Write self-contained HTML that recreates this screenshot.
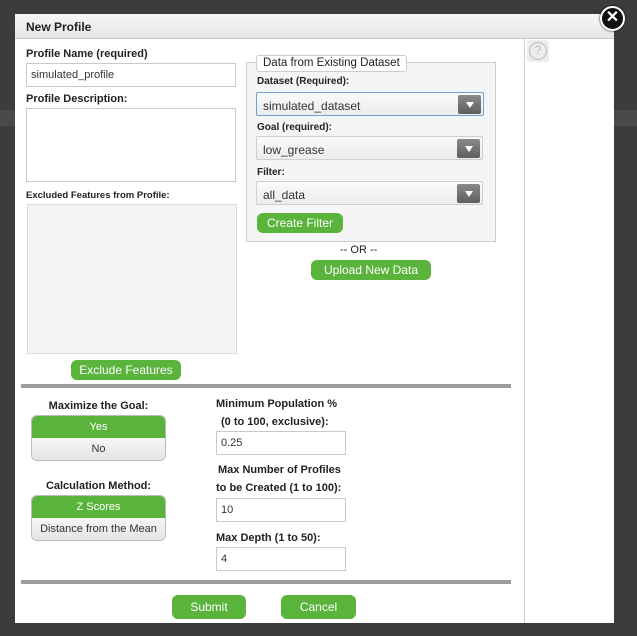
<!DOCTYPE html>
<html><head><style>
*{box-sizing:border-box;margin:0;padding:0}
body{width:637px;height:636px;background:#3c3c3c;position:relative;overflow:hidden;font-family:"Liberation Sans",sans-serif;color:#222}
.a{position:absolute}
.band{left:0;top:110px;width:637px;height:16px;background:#4a4a4a}
.dlg{left:15px;top:14px;width:599px;height:609px;background:#fff}
.hdr{left:15px;top:14px;width:599px;height:25px;background:linear-gradient(#f7f7f7,#e6e6e6);border-bottom:1px solid #c8c8c8;font-weight:bold;font-size:12px;padding:6px 0 0 11px;color:#222}
.vl{left:524px;top:39px;width:1px;height:584px;background:#ccc}
.lb{font-weight:bold;font-size:11px;white-space:nowrap}
.in{background:#fff;border:1px solid #c9c9c9;font-size:11px;padding:0 0 0 4px;display:flex;align-items:center;color:#333}
.btn{background:#5ab43c;color:#fff;border-radius:6px;font-size:12px;text-align:center;display:flex;align-items:center;justify-content:center}
.sel{background:linear-gradient(#fafafa,#ececec);border:1px solid #cfcfcf;border-radius:2px;font-size:12px;color:#333;padding:6px 0 0 6px}
.arr{position:absolute;right:2px;top:2px;width:23px;height:19px;background:linear-gradient(#8a8a8a,#5e5e5e);border-radius:2px}
.arr:after{content:"";position:absolute;left:8px;top:7px;border-left:4px solid transparent;border-right:4px solid transparent;border-top:6px solid #fff}
.hr{left:21px;width:490px;height:4px;background:#9c9c9c}
.tg{border:1px solid #bbb;border-radius:6px;overflow:hidden;font-size:11px;text-align:center}
.tg div{height:22px;line-height:22px}
.on{background:#5ab43c;color:#fff}
.off{background:linear-gradient(#f6f6f6,#e4e4e4);color:#333}
</style></head><body>
<div class="a band"></div>
<div class="a dlg"></div>
<div class="a hdr">New Profile</div>
<div class="a vl"></div>
<div class="a" style="left:527px;top:40px;width:22px;height:22px;background:#ececec;border-radius:3px"><div style="margin:2px;width:18px;height:18px;border:1.5px solid #bbb;border-radius:50%;color:#bbb;font-size:12px;text-align:center;line-height:15px">?</div></div>
<div class="a" style="left:600px;top:6px;width:25px;height:25px;background:#111;border:2px solid #fff;border-radius:50%;color:#fff;font-weight:bold;font-size:16px;text-align:center;line-height:20px;box-shadow:0 0 2px #000">✕</div>

<div class="a lb" style="left:26px;top:48px">Profile Name (required)</div>
<div class="a in" style="left:26px;top:63px;width:210px;height:24px">simulated_profile</div>
<div class="a lb" style="left:26px;top:93px">Profile Description:</div>
<div class="a in" style="left:26px;top:108px;width:210px;height:74px"></div>
<div class="a lb" style="left:26px;top:190px;font-size:9.5px">Excluded Features from Profile:</div>
<div class="a" style="left:27px;top:204px;width:210px;height:150px;background:#f4f4f4;border:1px solid #ddd"></div>
<div class="a btn" style="left:71px;top:360px;width:110px;height:20px">Exclude Features</div>

<div class="a" style="left:246px;top:62px;width:250px;height:180px;background:#f5f5f5;border:1px solid #ccc"></div>
<div class="a" style="left:256px;top:55px;width:151px;height:17px;background:#fff;border:1px solid #ccc;border-radius:3px;font-size:11.5px;padding:1px 0 0 6px;white-space:nowrap">Data from Existing Dataset</div>
<div class="a lb" style="left:257px;top:76px;font-size:10px">Dataset (Required):</div>
<div class="a sel" style="left:256px;top:92px;width:228px;height:24px;border-color:#6aa4d8">simulated_dataset<div class="arr"></div></div>
<div class="a lb" style="left:257px;top:122px;font-size:10px">Goal (required):</div>
<div class="a sel" style="left:256px;top:136px;width:227px;height:24px">low_grease<div class="arr"></div></div>
<div class="a lb" style="left:257px;top:167px;font-size:10px">Filter:</div>
<div class="a sel" style="left:256px;top:181px;width:227px;height:24px">all_data<div class="arr"></div></div>
<div class="a btn" style="left:257px;top:213px;width:86px;height:20px">Create Filter</div>
<div class="a" style="left:340px;top:244px;font-size:11px">-- OR --</div>
<div class="a btn" style="left:311px;top:260px;width:120px;height:20px">Upload New Data</div>

<div class="a hr" style="top:384px"></div>
<div class="a lb" style="left:31px;top:400px;width:135px;text-align:center">Maximize the Goal:</div>
<div class="a tg" style="left:31px;top:415px;width:135px"><div class="on">Yes</div><div class="off">No</div></div>
<div class="a lb" style="left:31px;top:480px;width:135px;text-align:center">Calculation Method:</div>
<div class="a tg" style="left:31px;top:495px;width:135px"><div class="on">Z Scores</div><div class="off">Distance from the Mean</div></div>

<div class="a lb" style="left:216px;top:398px">Minimum Population %</div>
<div class="a lb" style="left:221px;top:416px">(0 to 100, exclusive):</div>
<div class="a in" style="left:216px;top:431px;width:130px;height:24px">0.25</div>
<div class="a lb" style="left:218px;top:464px">Max Number of Profiles</div>
<div class="a lb" style="left:216px;top:482px">to be Created (1 to 100):</div>
<div class="a in" style="left:216px;top:498px;width:130px;height:24px">10</div>
<div class="a lb" style="left:216px;top:532px">Max Depth (1 to 50):</div>
<div class="a in" style="left:216px;top:547px;width:130px;height:24px">4</div>

<div class="a hr" style="top:580px"></div>
<div class="a btn" style="left:172px;top:595px;width:74px;height:24px">Submit</div>
<div class="a btn" style="left:281px;top:595px;width:75px;height:24px">Cancel</div>
</body></html>
